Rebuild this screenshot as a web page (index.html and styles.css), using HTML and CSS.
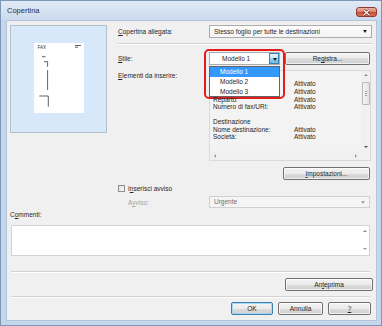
FILE: index.html
```html
<!DOCTYPE html>
<html lang="it">
<head>
    <meta charset="UTF-8">
    <title>Copertina</title>
    <link rel="stylesheet" href="styles.css">
</head>
<body>

<div class="window">
    <div class="titlebar">
        <span class="title">Copertina</span>
        <span class="close-btn">
            <svg width="9" height="7" viewBox="0 0 9 7">
                <path d="M1.5 0.8 L7.5 6.2 M7.5 0.8 L1.5 6.2" stroke="#5a1a10" stroke-width="2.4"/>
                <path d="M1.5 0.8 L7.5 6.2 M7.5 0.8 L1.5 6.2" stroke="#fff" stroke-width="1.3"/>
            </svg>
        </span>
    </div>

    <div class="client">
        <div class="top">
            <div class="preview">
                <div class="page">
                    <span class="fax">FAX</span>
                    <svg class="marks" width="50" height="70" viewBox="0 0 50 70">
                        <g stroke="#3a3a3a" stroke-width="0.8" fill="none">
                            <path d="M41 2.5 H47 M41 4.2 H44"/>
                            <path d="M8 13.7 H11.5"/>
                            <path d="M10 18.7 H13.6 V23.8"/>
                            <path d="M13.6 27 V47"/>
                            <path d="M5.3 53 H14.3 V63.7"/>
                        </g>
                    </svg>
                </div>
            </div>

            <div class="settings">
                <div class="row">
                    <span class="lbl"><u>C</u>opertina allegata:</span>
                    <div class="combo wide">Stesso foglio per tutte le destinazioni<span class="arrow"></span></div>
                </div>

                <div class="sep sep-top"></div>

                <div class="row style-row">
                    <span class="lbl"><u>S</u>tile:</span>
                    <div class="combo style-combo">Modello 1<span class="arrow-btn"><span class="arrow"></span></span></div>
                    <button class="btn registra">Re<u>g</u>istra...</button>

                    <div class="highlight"></div>
                    <ul class="drop-list">
                        <li class="selected">Modello 1</li>
                        <li>Modello 2</li>
                        <li>Modello 3</li>
                    </ul>
                </div>

                <div class="row items-row">
                    <span class="lbl"><u>E</u>lementi da inserire:</span>
                    <div class="listbox">
                        <div class="list-content">
                            <p>&nbsp;</p>
                            <p>&nbsp;<span>Attivato</span></p>
                            <p>&nbsp;<span>Attivato</span></p>
                            <p class="half">Reparto:<span>Attivato</span></p>
                            <p>Numero di fax/URI:<span>Attivato</span></p>
                            <p>&nbsp;</p>
                            <p>Destinazione</p>
                            <p>Nome destinazione:<span>Attivato</span></p>
                            <p>Società:<span>Attivato</span></p>
                        </div>
                        <div class="vscroll">
                            <span class="sarrow up"></span>
                            <span class="thumb"></span>
                            <span class="sarrow down"></span>
                        </div>
                        <div class="hscroll">
                            <span class="sarrow left"></span>
                            <span class="sarrow right"></span>
                        </div>
                        <div class="corner"></div>
                    </div>
                </div>

                <div class="btn-row">
                    <button class="btn impostazioni"><u>I</u>mpostazioni...</button>
                </div>
            </div>
        </div>

        <div class="check-row">
            <span class="checkbox"></span>
            <span>I<u>n</u>serisci avviso</span>
        </div>

        <div class="avviso-row">
            <span class="avviso-lbl">A<u>v</u>viso:</span>
            <div class="combo disabled">Urgente<span class="arrow"></span></div>
        </div>

        <div class="comment-lbl">C<u>o</u>mmenti:</div>
        <div class="comments">
            <span class="sarrow up"></span>
            <span class="sarrow down"></span>
        </div>

        <div class="sep sep-mid"></div>

        <div class="btn-row">
            <button class="btn anteprima">An<u>t</u>eprima</button>
        </div>

        <div class="sep sep-bottom"></div>

        <div class="btn-row actions">
            <button class="btn btn-ok">OK</button>
            <button class="btn btn-cancel">Annulla</button>
            <button class="btn btn-help"><u>?</u></button>
        </div>
    </div>
</div>

</body>
</html>
```

FILE: styles.css
```css
* {
    margin: 0;
    padding: 0;
    box-sizing: border-box;
    font-family: "Liberation Sans", Arial, sans-serif;
}

body {
    background-color: #ffffff;
    width: 382px;
    height: 326px;
    overflow: hidden;
}

.window {
    width: 382px;
    height: 326px;
    border: 1px solid #7d96b6;
    background-color: #c4d6ec;
    display: flex;
    flex-direction: column;
}

.titlebar {
    height: 19px;
    flex: none;
    display: flex;
    align-items: center;
    padding: 0 4px 0 6px;
    background: linear-gradient(#e1eaf6, #cbdbee);
}

.title {
    font-size: 7.5px;
    color: #1f2f46;
}

.close-btn {
    margin-left: auto;
    align-self: flex-start;
    margin-top: 6px;
    width: 21px;
    height: 10px;
    border: 1px solid #8e3a2c;
    border-radius: 3px;
    background: linear-gradient(#eeb2a4 0%, #dd8571 45%, #cb4d38 55%, #d96e56 100%);
    display: flex;
    align-items: center;
    justify-content: center;
}

.client {
    flex: 1;
    margin: 0 4px 4px 5px;
    border: 1px solid #b3c4d9;
    background-color: #f0f0f0;
    padding: 4px 4px 0 3px;
    display: flex;
    flex-direction: column;
    font-size: 6.5px;
    color: #262626;
}

u {
    text-decoration: underline;
    text-underline-offset: 1px;
}

/* preview + settings */

.top {
    display: flex;
    align-items: flex-start;
    gap: 11px;
}

.preview {
    width: 97px;
    height: 108px;
    flex: none;
    border: 1px solid #b4bfcc;
    background-color: #d8e8fb;
    display: flex;
    justify-content: center;
    padding-top: 17px;
}

.page {
    width: 50px;
    height: 70px;
    background-color: #fff;
    position: relative;
}

.fax {
    position: absolute;
    left: 4px;
    top: 2px;
    font-size: 4.5px;
    color: #333;
}

.marks {
    display: block;
}

.settings {
    width: 254px;
    display: flex;
    flex-direction: column;
}

.row {
    display: flex;
    align-items: center;
    height: 13px;
}

.lbl {
    width: 91px;
    flex: none;
    line-height: 7.5px;
}

.combo {
    position: relative;
    height: 13px;
    border: 1px solid #acacac;
    background: linear-gradient(#fdfdfd, #f4f4f4);
    line-height: 11px;
    padding-left: 4px;
    color: #262626;
    white-space: nowrap;
}

.combo.wide {
    width: 163px;
}

.arrow {
    position: absolute;
    right: 4px;
    top: 4px;
    width: 0;
    height: 0;
    border-left: 2.5px solid transparent;
    border-right: 2.5px solid transparent;
    border-top: 3px solid #222;
}

.sep {
    height: 2px;
    border-top: 1px solid #d2d2d2;
    border-bottom: 1px solid #ffffff;
}

.sep-top {
    margin: 5px 0 7px;
}

.style-row {
    position: relative;
}

.style-combo {
    width: 71px;
    background: #fff;
    padding-left: 12px;
}

.arrow-btn {
    position: absolute;
    right: 0;
    top: 0;
    width: 10px;
    height: 11px;
    border: 1px solid #3c7fb1;
    background: linear-gradient(#e3f4fc 0%, #c4e5f6 50%, #98d1ef 50%, #6cbbe6 100%);
}

.arrow-btn .arrow {
    right: 1.5px;
    top: 3.5px;
}

.registra {
    width: 85px;
    margin-left: 5px;
}

.highlight {
    position: absolute;
    left: 86px;
    top: -3px;
    width: 81px;
    height: 50px;
    border: 2px solid #e21b1b;
    border-radius: 5px;
    pointer-events: none;
}

.drop-list {
    position: absolute;
    left: 91px;
    top: 14px;
    width: 71px;
    height: 31px;
    list-style: none;
    background: #fff;
    border: 1px solid #646464;
    z-index: 2;
}

.drop-list li {
    height: 10px;
    line-height: 10px;
    padding-left: 10px;
    color: #262626;
}

.drop-list li.selected {
    background-color: #3399ff;
    color: #fff;
}

.items-row {
    height: auto;
    align-items: flex-start;
    margin-top: 5px;
}

.items-row .lbl {
    padding-top: 1.5px;
}

.listbox {
    width: 162px;
    height: 91px;
    border: 1px solid #dadada;
    background-color: #f3f3f3;
    display: grid;
    grid-template-columns: 1fr 9px;
    grid-template-rows: 1fr 9px;
}

.list-content {
    padding: 1.5px 0 0 3px;
    overflow: hidden;
}

.list-content p {
    position: relative;
    height: 7.6px;
    line-height: 7.6px;
    white-space: nowrap;
}

.list-content p.half {
    line-height: 6px;
    height: 7.6px;
    padding-top: 1.6px;
}

.list-content p span {
    position: absolute;
    left: 81px;
    top: 0;
}

.list-content p.half span {
    top: 1.6px;
}

.vscroll {
    position: relative;
    background-color: #f0f0f0;
}

.thumb {
    position: absolute;
    left: 1px;
    right: 0;
    top: 11px;
    height: 23px;
    border: 1px solid #b8b8b8;
    border-radius: 1px;
    background: linear-gradient(90deg, #f4f4f4, #e2e2e2);
}

.thumb::after {
    content: "";
    position: absolute;
    left: 2px;
    right: 2px;
    top: 8px;
    height: 5px;
    background: repeating-linear-gradient(#9a9a9a 0 1px, transparent 1px 2px);
}

.hscroll {
    position: relative;
    background-color: #f0f0f0;
}

.corner {
    background-color: #f0f0f0;
}

.sarrow {
    position: absolute;
    width: 0;
    height: 0;
}

.sarrow.up {
    top: 3px;
    left: 2.5px;
    border-left: 2px solid transparent;
    border-right: 2px solid transparent;
    border-bottom: 2px solid #8a8a8a;
}

.sarrow.down {
    bottom: 3px;
    left: 2.5px;
    border-left: 2px solid transparent;
    border-right: 2px solid transparent;
    border-top: 2px solid #4a4a4a;
}

.sarrow.left {
    left: 4px;
    top: 2.5px;
    border-top: 2px solid transparent;
    border-bottom: 2px solid transparent;
    border-right: 2px solid #9a9a9a;
}

.sarrow.right {
    right: 4px;
    top: 2.5px;
    border-top: 2px solid transparent;
    border-bottom: 2px solid transparent;
    border-left: 2px solid #9a9a9a;
}

/* buttons */

.btn {
    height: 13px;
    border: 1px solid #707070;
    border-radius: 2px;
    background: linear-gradient(#f3f3f3 0%, #ebebeb 50%, #dddddd 50%, #cfcfcf 100%);
    font-size: 6.5px;
    color: #262626;
    box-shadow: inset 0 0 0 1px rgba(255, 255, 255, 0.7);
}

.btn-row {
    display: flex;
    justify-content: flex-end;
}

.settings .btn-row {
    margin-top: 6px;
    padding-right: 2px;
}

.impostazioni {
    width: 87px;
}

/* lower part */

.check-row {
    display: flex;
    align-items: center;
    gap: 3px;
    height: 7px;
    margin-top: 5px;
    padding-left: 108px;
}

.checkbox {
    width: 7px;
    height: 7px;
    border: 1px solid #8e8f8f;
    background: linear-gradient(135deg, #dcdcdc, #fbfbfb);
}

.avviso-row {
    display: flex;
    align-items: center;
    height: 12px;
    margin-top: 4px;
}

.avviso-lbl {
    width: 199px;
    padding-left: 118px;
    color: #a3a3a3;
}

.combo.disabled {
    width: 161px;
    height: 12px;
    line-height: 10px;
    border-color: #d0d0d0;
    background: #f5f5f5;
    color: #6d6d6d;
}

.combo.disabled .arrow {
    border-top-color: #a8a8a8;
    top: 4px;
}

.comment-lbl {
    margin-top: 3px;
    height: 8px;
    line-height: 8px;
}

.comments {
    position: relative;
    margin: 6px 0 0 1px;
    width: 359px;
    height: 31px;
    border: 1px solid #cfd3da;
    background: #fff;
}

.comments .sarrow.up,
.comments .sarrow.down {
    left: auto;
    right: 2px;
}

.comments .sarrow.up {
    top: 4px;
}

.comments .sarrow.down {
    bottom: 5px;
    border-top-color: #9a9a9a;
}

.sep-mid {
    margin: 15px 2px 5px 1px;
}

.anteprima {
    width: 88px;
    margin-right: -1px;
}

.sep-bottom {
    margin: 5px 2px 4px 1px;
}

.actions {
    gap: 5px;
    margin-right: 1px;
}

.btn-ok {
    width: 42px;
    border-color: #3c7fb1;
    box-shadow: inset 0 0 0 1px #a6d8f4;
}

.btn-cancel {
    width: 45px;
}

.btn-help {
    width: 43px;
}
```
